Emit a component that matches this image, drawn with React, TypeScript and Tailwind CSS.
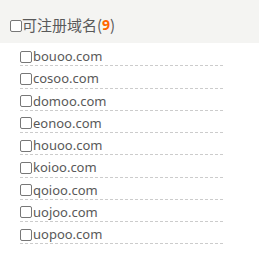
import React from 'react';

const domains = ['bouoo.com', 'cosoo.com', 'domoo.com', 'eonoo.com', 'houoo.com', 'koioo.com', 'qoioo.com', 'uojoo.com', 'uopoo.com'];

function Box({ className = '' }: { className?: string }) {
    return <span className={`inline-block w-[12px] h-[12px] border border-[#777] rounded-[2px] bg-white shrink-0 ${className}`} />;
}

export default function App() {
    return (
        <div className="w-[259px] h-[267px] bg-white text-[#595959]" style={{ fontFamily: '"Noto Sans", "Noto Sans CJK SC", sans-serif' }}>
            {/* header */}
            <div className="h-[43px] bg-[#f4f4f2] flex items-center pl-[10px] pt-[6px]">
                <Box className="mt-[2px]" />
                <span className="text-[15px] leading-none" style={{ fontFamily: '"Noto Sans CJK SC", sans-serif' }}>可注册域名(</span>
                <span className="text-[14px] leading-none font-bold text-[#f60]">9</span>
                <span className="text-[15px] leading-none" style={{ fontFamily: '"Noto Sans CJK SC", sans-serif' }}>)</span>
            </div>

            <div className="pl-[20px] pt-[1px]">
                {domains.map((d) => (
                    <div key={d} className="w-[203px] h-[22.25px] pt-[4px] flex items-center border-b border-dashed border-[#ccc]">
                        <Box />
                        <span className="text-[13px] leading-none ml-[1px]">{d}</span>
                    </div>
                ))}
            </div>
        </div>
    );
}
